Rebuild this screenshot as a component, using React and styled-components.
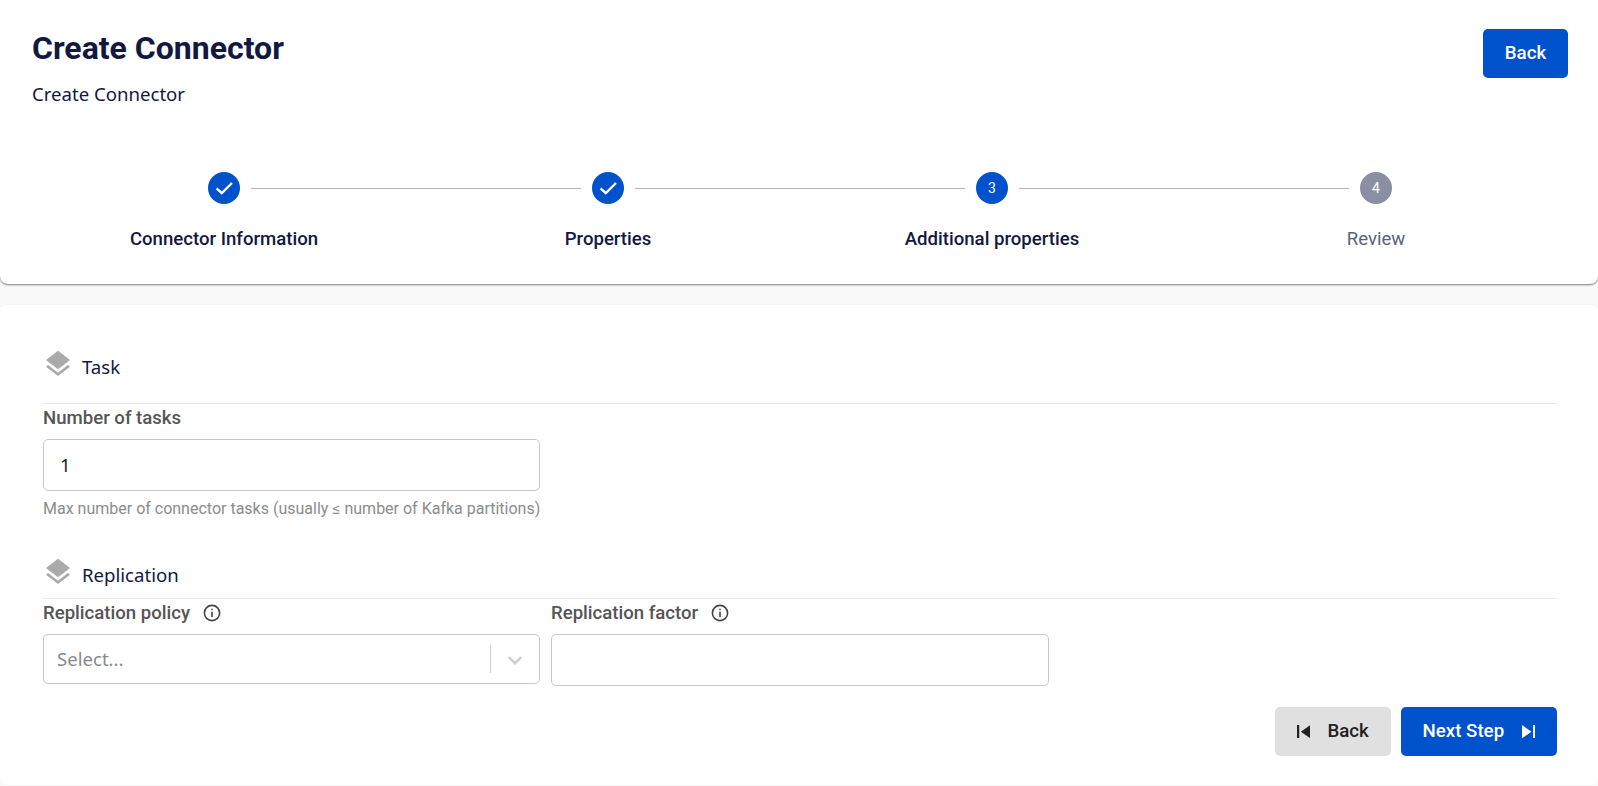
import React from "react";
import styled, { createGlobalStyle } from "styled-components";

const GlobalStyle = createGlobalStyle`
  html, body {
    margin: 0;
    padding: 0;
    background-color: #f9f9f9;
  }
  * {
    box-sizing: border-box;
  }
`;

const Page = styled.div`
  display: flex;
  flex-direction: column;
  gap: 21px;
  width: 1598px;
  height: 786px;
  overflow: hidden;
`;

const HeaderCard = styled.header`
  height: 284px;
  padding: 29px 30px 0 32px;
  background-color: #fff;
  border-radius: 0 0 8px 8px;
  box-shadow: 0 1px 2px rgba(0, 0, 0, 0.5);
`;

const TopRow = styled.div`
  display: flex;
  justify-content: space-between;
  align-items: flex-start;
  height: 143px;
`;

const Title = styled.h1`
  margin: 0;
  font-family: Roboto, sans-serif;
  font-size: 32px;
  line-height: 38px;
  font-weight: 700;
  color: #12183f;
`;

const Subtitle = styled.p`
  margin: 15px 0 0;
  font-family: "Noto Sans", sans-serif;
  font-size: 18.6px;
  line-height: 24px;
  color: #12183f;
`;

const Button = styled.button`
  display: flex;
  align-items: center;
  justify-content: center;
  gap: ${(p) => p.$gap || 0}px;
  width: ${(p) => p.$width}px;
  height: 49px;
  padding: 0 0 2px;
  border: none;
  border-radius: 5px;
  font-family: Roboto, sans-serif;
  font-size: 18.7px;
  font-weight: 500;
  color: ${(p) => (p.$muted ? "#222" : "#fff")};
  background-color: ${(p) => (p.$muted ? "#e0e0e0" : "#0052cc")};
`;

const Stepper = styled.ol`
  display: grid;
  grid-template-columns: repeat(4, 384px);
  margin: 0;
  padding: 0;
  list-style: none;
`;

const Step = styled.li`
  display: flex;
  flex-direction: column;
  align-items: center;
`;

const StepHead = styled.div`
  display: flex;
  align-items: center;
  width: 100%;
  height: 32px;
`;

const Connector = styled.span`
  flex: 1;
  height: 1px;
  background-color: ${(p) => (p.$hidden ? "transparent" : "#b4b4b4")};
  margin: ${(p) => (p.$side === "left" ? "0 11px 0 0" : "0 0 0 11px")};
`;

const StepCircle = styled.span`
  display: flex;
  align-items: center;
  justify-content: center;
  width: 32px;
  height: 32px;
  border-radius: 50%;
  font-family: Roboto, sans-serif;
  font-size: 14px;
  color: #fff;
  background-color: ${(p) => (p.$pending ? "#8b8fa3" : "#0052cc")};
`;

const StepLabel = styled.span`
  margin-top: 23px;
  font-family: Roboto, sans-serif;
  font-size: 18.6px;
  line-height: 24px;
  font-weight: ${(p) => (p.$pending ? 400 : 500)};
  color: ${(p) => (p.$pending ? "#5b5f80" : "#12183f")};
`;

const FormCard = styled.main`
  flex: 1;
  margin-bottom: 1px;
  padding: 43px 41px 0 43px;
  background-color: #fff;
  border-radius: 6px;
  box-shadow: 0 0 2px rgba(0, 0, 0, 0.06);
`;

const SectionHead = styled.div`
  display: flex;
  align-items: flex-start;
  gap: 8px;
  height: ${(p) => p.$height}px;
  margin-left: -1px;
  border-bottom: 1px solid #e8e8e8;
`;

const SectionIcon = styled.svg`
  width: 32px;
  height: 32px;
  fill: #aaaaaa;
  flex-shrink: 0;
`;

const SectionTitle = styled.h2`
  margin: 7px 0 0;
  font-family: "Noto Sans", sans-serif;
  font-size: 18.6px;
  line-height: 24px;
  font-weight: 400;
  color: #12183f;
`;

const FieldRow = styled.div`
  display: flex;
  gap: 11px;
`;

const Field = styled.div`
  width: ${(p) => p.$width || 497}px;
`;

const Label = styled.label`
  display: flex;
  align-items: center;
  gap: 12px;
  height: 24px;
  margin: 2px 0 9px;
  font-family: Roboto, sans-serif;
  font-size: 18.6px;
  font-weight: 500;
  color: #555;
`;

const InfoIcon = styled.svg`
  width: 20px;
  height: 20px;
  fill: none;
  stroke: #444;
  stroke-width: 1.6;
  stroke-linecap: round;
`;

const Input = styled.div`
  display: flex;
  align-items: center;
  height: ${(p) => p.$height || 52}px;
  padding: 0 16px 2px;
  border: 1px solid #c8c8c8;
  border-radius: 5px;
  font-family: "Noto Sans", sans-serif;
  font-size: 18.6px;
  color: #222;
`;

const SelectBox = styled(Input)`
  justify-content: space-between;
  padding: 0 14px 0 13px;
  color: #8a8a8a;
`;

const Placeholder = styled.span`
  margin-bottom: 2px;
`;

const SelectControls = styled.span`
  display: flex;
  align-items: center;
  gap: 14px;
`;

const SelectDivider = styled.span`
  width: 1px;
  height: 28px;
  background-color: #ccc;
`;

const Chevron = styled.svg`
  width: 20px;
  height: 20px;
  fill: #cccccc;
`;

const HelpText = styled.p`
  margin: 9px 0 38px;
  font-family: Roboto, sans-serif;
  font-size: 16px;
  line-height: 18px;
  color: #8c8c8c;
  white-space: nowrap;
`;

const Actions = styled.div`
  display: flex;
  justify-content: flex-end;
  gap: 10px;
  margin-top: 21px;
`;

const SkipIcon = styled.svg`
  width: 13.3px;
  height: 13.3px;
  margin-top: 2px;
  fill: currentColor;
`;

const Check = () => (
  <svg width="24" height="24" viewBox="0 0 24 24" fill="none" stroke="#fff" strokeWidth="2.4">
    <path d="M4.5 12.3l5.3 4.7L20 7" />
  </svg>
);

const Layers = () => (
  <SectionIcon viewBox="0 0 24 24">
    <path d="M11.99 18.54l-7.37-5.73L3 14.07l9 7 9-7-1.63-1.27-7.38 5.74zM12 16l7.36-5.73L21 9l-9-7-9 7 1.63 1.27L12 16z" />
  </SectionIcon>
);

const Info = () => (
  <InfoIcon viewBox="0 0 20 20">
    <circle cx="10" cy="10" r="7.6" />
    <path d="M10 9.2v4.4M10 6.4v.2" />
  </InfoIcon>
);

const steps = [
  { label: "Connector Information", done: true },
  { label: "Properties", done: true },
  { label: "Additional properties", number: 3 },
  { label: "Review", number: 4, pending: true },
];

const App = () => (
  <Page>
    <GlobalStyle />
    <HeaderCard>
      <TopRow>
        <div>
          <Title>Create Connector</Title>
          <Subtitle>Create Connector</Subtitle>
        </div>
        <Button $width={85}>Back</Button>
      </TopRow>
      <Stepper>
        {steps.map((step, i) => (
          <Step key={step.label}>
            <StepHead>
              <Connector $side="left" $hidden={i === 0} />
              <StepCircle $pending={step.pending}>
                {step.done ? <Check /> : step.number}
              </StepCircle>
              <Connector $side="right" $hidden={i === steps.length - 1} />
            </StepHead>
            <StepLabel $pending={step.pending}>{step.label}</StepLabel>
          </Step>
        ))}
      </Stepper>
    </HeaderCard>

    <FormCard>
      <SectionHead $height={56}>
        <Layers />
        <SectionTitle>Task</SectionTitle>
      </SectionHead>
      <Field>
        <Label>Number of tasks</Label>
        <Input>1</Input>
        <HelpText>Max number of connector tasks (usually ≤ number of Kafka partitions)</HelpText>
      </Field>

      <SectionHead $height={43}>
        <Layers />
        <SectionTitle>Replication</SectionTitle>
      </SectionHead>
      <FieldRow>
        <Field>
          <Label>
            Replication policy
            <Info />
          </Label>
          <SelectBox $height={50}>
            <Placeholder>Select...</Placeholder>
            <SelectControls>
              <SelectDivider />
              <Chevron viewBox="0 0 20 20">
                <path d="M4.5 7.2L10 12.6l5.5-5.4 1.7 1.6L10 15.9 2.8 8.8z" />
              </Chevron>
            </SelectControls>
          </SelectBox>
        </Field>
        <Field $width={498}>
          <Label>
            Replication factor
            <Info />
          </Label>
          <Input />
        </Field>
      </FieldRow>
      <Actions>
        <Button $muted $width={116} $gap={17}>
          <SkipIcon viewBox="6 6 12 12">
            <path d="M6 6h2v12H6zm3.5 6l8.5 6V6z" />
          </SkipIcon>
          Back
        </Button>
        <Button $width={156} $gap={18}>
          Next Step
          <SkipIcon viewBox="6 6 12 12">
            <path d="M6 18l8.5-6L6 6v12zM16 6v12h2V6h-2z" />
          </SkipIcon>
        </Button>
      </Actions>
    </FormCard>
  </Page>
);

export default App;
